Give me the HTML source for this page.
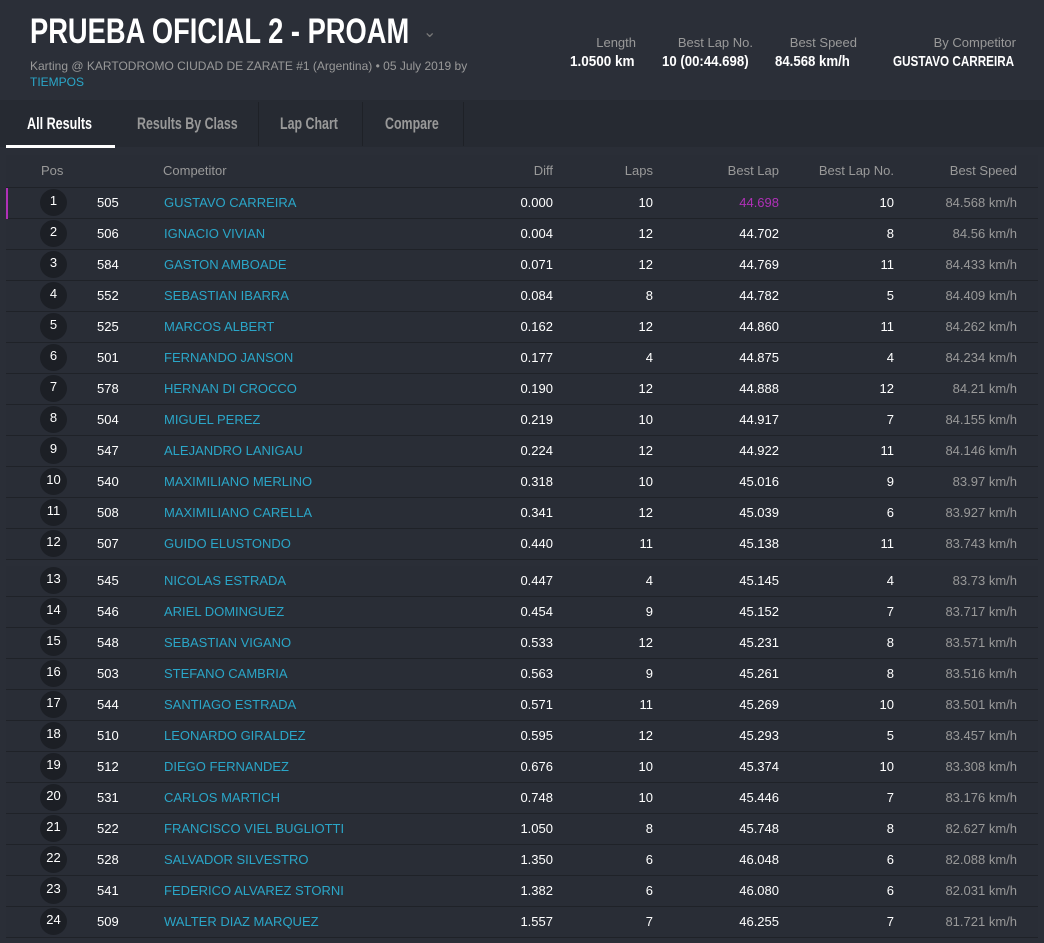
<!DOCTYPE html><html><head><style>
body{margin:0;width:1044px;height:943px;background:#2a2e37;font-family:"Liberation Sans",sans-serif;position:relative;overflow:hidden;color:#fff}
.a{position:absolute;white-space:nowrap}
.cond{font-weight:bold;transform-origin:0 0;transform:scaleX(.8)}
.row{position:absolute;left:6px;width:1032px;height:30px;background:#292d36;border-bottom:1px solid #1f2228;font-size:13px}
.row div{position:absolute;top:7px;white-space:nowrap}
.c{left:34px!important;top:1px!important;width:27px;height:27px;border-radius:50%;background:#1c1f25;text-align:center;line-height:24px;font-size:13px}
.r{text-align:right}
</style></head><body>
<div class="a" style="left:0;top:0;width:1044px;height:100px;background:#2b2f38"></div>
<div class="a cond" style="left:30px;top:12px;font-size:35px;transform:scaleX(.78)">PRUEBA OFICIAL 2 - PROAM</div>
<div class="a" style="left:423px;top:22px;color:#777;font-size:16px">&#8964;</div>
<div class="a" style="left:30px;top:59px;font-size:12px;color:#999">Karting @ KARTODROMO CIUDAD DE ZARATE #1 (Argentina) • 05 July 2019 by</div>
<div class="a" style="left:30px;top:75px;font-size:12px;color:#2aa6c8">TIEMPOS</div>
<div class="a r" style="right:408px;top:35px;font-size:13px;color:#999">Length</div>
<div class="a r" style="right:291px;top:35px;font-size:13px;color:#999">Best Lap No.</div>
<div class="a r" style="right:187px;top:35px;font-size:13px;color:#999">Best Speed</div>
<div class="a r" style="right:28px;top:35px;font-size:13px;color:#999">By Competitor</div>
<div class="a" style="left:570px;top:53px;font-size:15px;font-weight:bold;transform:scaleX(.9);transform-origin:0 0">1.0500 km</div>
<div class="a" style="left:662px;top:53px;font-size:15px;font-weight:bold;transform:scaleX(.88);transform-origin:0 0">10 (00:44.698)</div>
<div class="a" style="left:775px;top:53px;font-size:15px;font-weight:bold;transform:scaleX(.88);transform-origin:0 0">84.568 km/h</div>
<div class="a" style="left:893px;top:53px;font-size:15px;font-weight:bold;transform:scaleX(.78);transform-origin:0 0">GUSTAVO CARREIRA</div>
<div class="a" style="left:0;top:100px;width:1044px;height:47px;background:#262a32"></div>
<div class="a" style="left:6px;top:145px;width:109px;height:3px;background:#fff"></div>
<div class="a" style="left:258px;top:102px;width:1px;height:44px;background:#1e2127"></div>
<div class="a" style="left:362px;top:102px;width:1px;height:44px;background:#1e2127"></div>
<div class="a" style="left:463px;top:102px;width:1px;height:44px;background:#1e2127"></div>
<div class="a cond" style="left:27px;top:114px;font-size:17px;transform:scaleX(.74)">All Results</div>
<div class="a cond" style="left:137px;top:114px;font-size:17px;color:#999;transform:scaleX(.73)">Results By Class</div>
<div class="a cond" style="left:280px;top:114px;font-size:17px;color:#999;transform:scaleX(.73)">Lap Chart</div>
<div class="a cond" style="left:385px;top:114px;font-size:17px;color:#999;transform:scaleX(.73)">Compare</div>
<div class="a" style="left:6px;top:155px;width:1032px;height:32px;background:#292d36;border-bottom:1px solid #1f2228"></div>
<div class="a" style="left:41px;top:163px;font-size:13px;color:#999">Pos</div>
<div class="a" style="left:163px;top:163px;font-size:13px;color:#999">Competitor</div>
<div class="a r" style="right:491px;top:163px;font-size:13px;color:#999">Diff</div>
<div class="a r" style="right:391px;top:163px;font-size:13px;color:#999">Laps</div>
<div class="a r" style="right:265px;top:163px;font-size:13px;color:#999">Best Lap</div>
<div class="a r" style="right:150px;top:163px;font-size:13px;color:#999">Best Lap No.</div>
<div class="a r" style="right:27px;top:163px;font-size:13px;color:#999">Best Speed</div>
<div class="a" style="left:6px;top:188px;width:2px;height:31px;background:#b030b8;z-index:2"></div>
<div id="t"></div>
<script>
var d=[["505","GUSTAVO CARREIRA","0.000","10","44.698","10","84.568"],["506","IGNACIO VIVIAN","0.004","12","44.702","8","84.56"],["584","GASTON AMBOADE","0.071","12","44.769","11","84.433"],["552","SEBASTIAN IBARRA","0.084","8","44.782","5","84.409"],["525","MARCOS ALBERT","0.162","12","44.860","11","84.262"],["501","FERNANDO JANSON","0.177","4","44.875","4","84.234"],["578","HERNAN DI CROCCO","0.190","12","44.888","12","84.21"],["504","MIGUEL PEREZ","0.219","10","44.917","7","84.155"],["547","ALEJANDRO LANIGAU","0.224","12","44.922","11","84.146"],["540","MAXIMILIANO MERLINO","0.318","10","45.016","9","83.97"],["508","MAXIMILIANO CARELLA","0.341","12","45.039","6","83.927"],["507","GUIDO ELUSTONDO","0.440","11","45.138","11","83.743"],["545","NICOLAS ESTRADA","0.447","4","45.145","4","83.73"],["546","ARIEL DOMINGUEZ","0.454","9","45.152","7","83.717"],["548","SEBASTIAN VIGANO","0.533","12","45.231","8","83.571"],["503","STEFANO CAMBRIA","0.563","9","45.261","8","83.516"],["544","SANTIAGO ESTRADA","0.571","11","45.269","10","83.501"],["510","LEONARDO GIRALDEZ","0.595","12","45.293","5","83.457"],["512","DIEGO FERNANDEZ","0.676","10","45.374","10","83.308"],["531","CARLOS MARTICH","0.748","10","45.446","7","83.176"],["522","FRANCISCO VIEL BUGLIOTTI","1.050","8","45.748","8","82.627"],["528","SALVADOR SILVESTRO","1.350","6","46.048","6","82.088"],["541","FEDERICO ALVAREZ STORNI","1.382","6","46.080","6","82.031"],["509","WALTER DIAZ MARQUEZ","1.557","7","46.255","7","81.721"]];
var h="";d.forEach(function(r,i){var top=i<12?188+31*i:566+31*(i-12);
h+='<div class="row" style="top:'+top+'px"><div class="c">'+(i+1)+'</div><div style="left:91px">'+r[0]+'</div><div style="left:158px;color:#2aa6c8">'+r[1]+'</div><div class="r" style="right:485px">'+r[2]+'</div><div class="r" style="right:385px">'+r[3]+'</div><div class="r" style="right:259px;'+(i==0?'color:#b030b8':'')+'">'+r[4]+'</div><div class="r" style="right:144px">'+r[5]+'</div><div class="r" style="right:21px;color:#999">'+r[6]+' km/h</div></div>';});
document.getElementById("t").innerHTML=h;
</script>
</body></html>
